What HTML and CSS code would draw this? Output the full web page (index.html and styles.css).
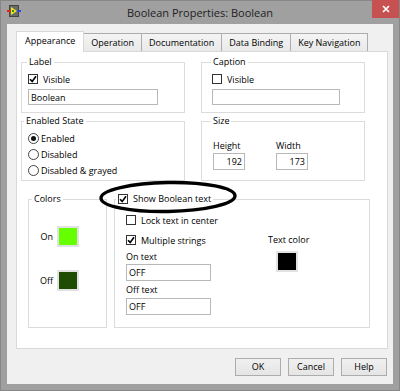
FILE: index.html
```html
<!DOCTYPE html>
<html lang="en">
<head>
    <meta charset="UTF-8">
    <title>Boolean Properties: Boolean</title>
    <link rel="stylesheet" href="styles.css">
</head>
<body>
    <div class="window">
        <div class="titlebar">
            <svg class="appicon" width="14" height="12" viewBox="0 0 14 12">
                <rect x="2.5" y="0.5" width="9" height="11" fill="#6a6a6a" stroke="#444"/>
                <line x1="0" y1="6" x2="4" y2="6" stroke="#e0261e" stroke-width="2"/>
                <line x1="10" y1="6" x2="14" y2="6" stroke="#2a4be0" stroke-width="2"/>
                <polygon points="4,2 10,6 4,10" fill="#f2e21a"/>
                <rect x="5" y="5" width="2" height="2" fill="#1f9a2a"/>
            </svg>
            <div class="title">Boolean Properties: Boolean</div>
            <div class="close">
                <svg width="8" height="8" viewBox="0 0 8 8"><path d="M1 1L7 7M7 1L1 7" stroke="#fff" stroke-width="1.7"/></svg>
            </div>
        </div>

        <div class="client">
            <div class="tabs">
                <div class="tab active">Appearance</div>
                <div class="tab">Operation</div>
                <div class="tab">Documentation</div>
                <div class="tab">Data Binding</div>
                <div class="tab">Key Navigation</div>
            </div>

            <div class="panel">
                <div class="pair top">
                    <fieldset class="group">
                        <legend class="lg-label">Label</legend>
                        <div class="inner label-inner">
                            <div class="check"><span class="box on"><svg width="8" height="8" viewBox="0 0 8 8"><path d="M1 4.2L3.2 6.4L7 1.2" fill="none" stroke="#000" stroke-width="1.6"/></svg></span>Visible</div>
                            <input class="field label-field" type="text" value="Boolean" readonly>
                        </div>
                    </fieldset>
                    <fieldset class="group">
                        <legend class="lg-caption">Caption</legend>
                        <div class="inner caption-inner">
                            <div class="check"><span class="box"></span>Visible</div>
                            <input class="field caption-field" type="text" value="" readonly>
                        </div>
                    </fieldset>
                </div>

                <div class="pair middle">
                    <fieldset class="group">
                        <legend class="lg-enabled">Enabled State</legend>
                        <div class="inner radios">
                            <div class="radio"><span class="dot on"></span>Enabled</div>
                            <div class="radio"><span class="dot"></span>Disabled</div>
                            <div class="radio"><span class="dot"></span>Disabled &amp; grayed</div>
                        </div>
                    </fieldset>
                    <fieldset class="group">
                        <legend class="lg-size">Size</legend>
                        <div class="inner size-inner">
                            <div class="sizecol">
                                <div class="caption">Height</div>
                                <input class="field num" type="text" value="192" readonly>
                            </div>
                            <div class="sizecol">
                                <div class="caption">Width</div>
                                <input class="field num" type="text" value="173" readonly>
                            </div>
                        </div>
                    </fieldset>
                </div>

                <div class="lower">
                    <fieldset class="group colors">
                        <legend class="lg-colors">Colors</legend>
                        <div class="swatchrow first"><span class="swname">On</span><span class="swatch green"></span></div>
                        <div class="swatchrow second"><span class="swname">Off</span><span class="swatch darkgreen"></span></div>
                    </fieldset>
                    <fieldset class="group booltext">
                        <legend class="lg-bool">
                            <span class="check"><span class="box on"><svg width="8" height="8" viewBox="0 0 8 8"><path d="M1 4.2L3.2 6.4L7 1.2" fill="none" stroke="#000" stroke-width="1.6"/></svg></span>Show Boolean text</span>
                        </legend>
                        <div class="inner bool-inner">
                            <div class="check"><span class="box"></span>Lock text in center</div>
                            <div class="boolcols">
                                <div class="strings">
                                    <div class="check"><span class="box on"><svg width="8" height="8" viewBox="0 0 8 8"><path d="M1 4.2L3.2 6.4L7 1.2" fill="none" stroke="#000" stroke-width="1.6"/></svg></span>Multiple strings</div>
                                    <div class="caption on-cap">On text</div>
                                    <input class="field str" type="text" value="OFF" readonly>
                                    <div class="caption off-cap">Off text</div>
                                    <input class="field str off-field" type="text" value="OFF" readonly>
                                </div>
                                <div class="textcolor">
                                    <div class="caption">Text color</div>
                                    <span class="swatch black"></span>
                                </div>
                            </div>
                        </div>
                    </fieldset>
                </div>
            </div>

            <div class="buttons">
                <div class="btn">OK</div>
                <div class="btn">Cancel</div>
                <div class="btn">Help</div>
            </div>
        </div>

        <!-- hand drawn mark over the checkbox -->
        <svg class="mark" width="140" height="36" viewBox="0 0 140 36">
            <ellipse cx="70" cy="18" rx="67" ry="14.5" fill="none" stroke="#000" stroke-width="3.4" transform="rotate(-1 70 18)"/>
        </svg>
    </div>
</body>
</html>
```

FILE: styles.css
```css
body {
    margin: 0;
    padding: 0;
    font-family: "Open Sans", "Liberation Sans", sans-serif;
    font-size: 9px;
    color: #000;
}

.window {
    position: relative;
    width: 400px;
    height: 391px;
    box-sizing: border-box;
    border: 1px solid #878787;
    background: #a0a0a0;
    display: flex;
    flex-direction: column;
}

/* title bar */

.titlebar {
    height: 23px;
    display: grid;
    grid-template-columns: 1fr auto 1fr;
    align-items: start;
}

.appicon {
    margin: 4px 0 0 6px;
}

.title {
    padding-top: 5px;
    line-height: 14px;
    font-size: 11px;
    color: #1e1e1e;
}

.close {
    justify-self: end;
    width: 27px;
    height: 18px;
    margin-top: -1px;
    background: #c75050;
    display: flex;
    justify-content: center;
    align-items: center;
}

/* client */

.client {
    margin: 0 6px 6px 6px;
    height: 360px;
    box-sizing: border-box;
    background: #f0f0f0;
    padding: 7px 5px 0 9px;
}

.tabs {
    display: flex;
    align-items: flex-end;
    height: 20px;
}

.tab {
    height: 18px;
    box-sizing: border-box;
    padding: 0 7px;
    line-height: 17px;
    border: 1px solid #acacac;
    border-bottom: none;
    margin-left: -1px;
    background: linear-gradient(#f4f4f4, #e9e9e9);
    white-space: nowrap;
}

.tab.active {
    position: relative;
    z-index: 1;
    height: 21px;
    margin: 0 0 -1px 0;
    padding: 0 8px;
    line-height: 18px;
    background: #fff;
    border-color: #d9d9d9;
}

.panel {
    height: 298px;
    box-sizing: border-box;
    background: #fff;
    border: 1px solid #d9d9d9;
    padding: 4px 0 0 4px;
}

/* group boxes */

.group {
    margin: 0;
    padding: 0;
    min-width: 0;
    border: 1px solid #dcdcdc;
}

.group legend {
    padding: 0 2px;
    line-height: 12px;
}

.lg-label { margin-left: 5px; }
.lg-caption { margin-left: 9px; }
.lg-enabled { margin-left: 2px; }
.lg-size { margin-left: 9px; }
.lg-colors { margin-left: 3px; }
.lg-bool { margin-left: 1px; }

.pair {
    display: grid;
    grid-template-columns: 164px 164px;
    column-gap: 16px;
}

.pair.middle {
    margin-top: 2px;
}

.check {
    display: flex;
    align-items: center;
    height: 12px;
    white-space: nowrap;
}

.box {
    width: 10px;
    height: 10px;
    box-sizing: border-box;
    border: 1px solid #333;
    background: #fff;
    margin-right: 5px;
    display: inline-flex;
    justify-content: center;
    align-items: center;
}

.field {
    display: block;
    box-sizing: border-box;
    height: 17px;
    margin: 0;
    padding: 0 2px;
    border: 1px solid #b8b8b8;
    background: #fff;
    font: inherit;
    color: #000;
    outline: none;
}

.caption {
    line-height: 12px;
    white-space: nowrap;
}

.label-inner {
    padding: 5px 0 7px 6px;
}

.caption-inner {
    padding: 5px 0 7px 10px;
}

.label-inner .field,
.caption-inner .field {
    margin-top: 4px;
    height: 16px;
}

.label-field { width: 130px; }
.caption-field { width: 128px; }

.radios {
    padding: 3px 0 2px 6px;
}

.radio {
    display: flex;
    align-items: center;
    height: 16px;
}

.dot {
    width: 11px;
    height: 11px;
    box-sizing: border-box;
    border: 1px solid #444;
    border-radius: 50%;
    background: #fff;
    margin-right: 2px;
    display: inline-flex;
    justify-content: center;
    align-items: center;
}

.dot.on::after {
    content: "";
    width: 5px;
    height: 5px;
    border-radius: 50%;
    background: #111;
}

.size-inner {
    display: flex;
    gap: 31px;
    padding: 13px 0 0 11px;
}

.sizecol .field {
    margin-top: 1px;
    width: 32px;
    text-align: right;
}

/* lower part */

.lower {
    display: flex;
    gap: 7px;
    margin: 12px 0 0 7px;
    height: 135px;
}

.colors {
    width: 79px;
    box-sizing: border-box;
}

.swatchrow {
    display: flex;
    align-items: center;
    padding-left: 8px;
}

.swatchrow.first { margin-top: 21px; }
.swatchrow.second { margin-top: 23px; }

.swname {
    width: 16px;
    text-align: right;
    margin-right: 4px;
}

.swatch {
    display: block;
    width: 22px;
    height: 21px;
    box-sizing: border-box;
    border: 2px solid #e2e2e2;
}

.green { background: #66ff00; }
.darkgreen { background: #1f4d04; }
.black { background: #000; }

.booltext {
    width: 256px;
    box-sizing: border-box;
}

.bool-inner {
    padding: 9px 0 0 11px;
}

.boolcols {
    display: flex;
    margin-top: 8px;
}

.strings .field {
    width: 85px;
    margin-top: 1px;
}

.on-cap { margin-top: 5px; }
.off-cap { margin-top: 3px; }
.strings .off-field { margin-top: 2px; }

.textcolor {
    margin-left: 57px;
}

.textcolor .swatch {
    margin: 5px 0 0 8px;
}

/* dialog buttons */

.buttons {
    display: flex;
    justify-content: flex-end;
    gap: 7px;
    margin-top: 9px;
    padding-right: 1px;
}

.btn {
    width: 46px;
    height: 18px;
    box-sizing: border-box;
    border: 1px solid #acacac;
    background: linear-gradient(#f0f0f0, #e5e5e5);
    text-align: center;
    line-height: 16px;
}

.mark {
    position: absolute;
    left: 97px;
    top: 178px;
}
```
